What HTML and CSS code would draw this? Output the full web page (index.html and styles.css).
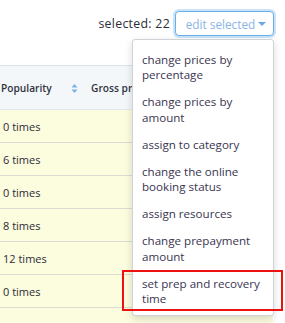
FILE: index.html
```html
<!DOCTYPE html>
<html>
<head>
<meta charset="utf-8">
<link rel="stylesheet" href="styles.css">
</head>
<body>
<div class="page">
  <div class="toolbar">
    <span class="selected">selected: 22</span>
    <button class="edit-btn">edit selected <span class="caret"></span></button>
  </div>
  <div class="table">
    <div class="thead">
      <div class="th pop"><span>Popularity</span>
        <svg class="sort" width="7" height="11" viewBox="0 0 7 11"><path d="M0.5 4.5 L3.5 1 L6.5 4.5 Z M0.5 6.5 L3.5 10 L6.5 6.5 Z" fill="#7ab0e4"/></svg>
      </div>
      <div class="th gross">Gross price</div>
    </div>
    <div class="row"><span class="cell">0 times</span></div>
    <div class="row"><span class="cell">6 times</span></div>
    <div class="row"><span class="cell">0 times</span></div>
    <div class="row"><span class="cell">8 times</span></div>
    <div class="row"><span class="cell">12 times</span></div>
    <div class="row"><span class="cell">0 times</span></div>
    <div class="row"><span class="cell"></span></div>
  </div>
  <ul class="menu">
    <li>change prices by percentage</li>
    <li>change prices by amount</li>
    <li>assign to category</li>
    <li>change the online booking status</li>
    <li>assign resources</li>
    <li>change prepayment amount</li>
    <li class="hl">set prep and recovery time</li>
  </ul>
  <div class="highlight-box"></div>
</div>
</body>
</html>
```
FILE: styles.css
```css
html, body {
  margin: 0;
  padding: 0;
  background: #fff;
  overflow: hidden;
}
.page {
  position: relative;
  width: 285px;
  height: 323px;
  overflow: hidden;
  font-family: "Open Sans", "Liberation Sans", sans-serif;
  font-size: 12px;
  color: #333;
}
.toolbar {
  display: flex;
  justify-content: flex-end;
  align-items: center;
  padding: 11px 11px 0 0;
  height: 25px;
}
.selected {
  margin-right: 5px;
  font-size: 12.3px;
  letter-spacing: 0.3px;
  color: #2c2c36;
}
.edit-btn {
  width: 99px;
  height: 25px;
  border: 1px solid #6aaeec;
  border-radius: 4px;
  box-shadow: 0 0 0 2px rgba(102, 175, 233, 0.35);
  background: #fff;
  color: #8ab4e6;
  font-family: inherit;
  font-size: 11.8px;
  padding: 0 0 0 3px;
  display: flex;
  align-items: center;
  justify-content: center;
  gap: 3px;
}
.caret {
  width: 0;
  height: 0;
  border-left: 4px solid transparent;
  border-right: 4px solid transparent;
  border-top: 4px solid #6aa8e6;
}
.table {
  width: 273px;
  margin-top: 29px;
  border-top: 1px solid #dfe3e8;
}
.thead {
  height: 43px;
  background: #f4f7fa;
  border-bottom: 1px solid #e3e6ea;
  display: flex;
  align-items: center;
  font-weight: 600;
  font-size: 10.2px;
  color: #2f3340;
}
.th.pop {
  padding-left: 1px;
  width: 77px;
  margin-right: 13px;
  display: flex;
  align-items: center;
  justify-content: space-between;
}
.sort {
  margin-top: 1px;
}
.th.gross {
  white-space: nowrap;
}
.row {
  height: 32px;
  background: #fcfcdf;
  border-bottom: 1px solid #dcdcd4;
  display: flex;
  align-items: center;
  font-size: 11px;
  color: #2c2c36;
}
.cell {
  padding-left: 3px;
}
.menu {
  position: absolute;
  left: 132px;
  top: 39px;
  width: 140px;
  margin: 0;
  padding: 6px 0 2px 0;
  list-style: none;
  background: #fff;
  border: 1px solid #cfd3d8;
  border-radius: 3px;
  box-shadow: 0 3px 8px rgba(0, 0, 0, 0.15);
  font-size: 11.6px;
}
.menu li {
  padding: 5.75px 8px 5.75px 9px;
  line-height: 15.5px;
  color: #3a3550;
}
.highlight-box {
  position: absolute;
  left: 122px;
  top: 270px;
  width: 157px;
  height: 37px;
  border: 2px solid #ee1111;
}
```
